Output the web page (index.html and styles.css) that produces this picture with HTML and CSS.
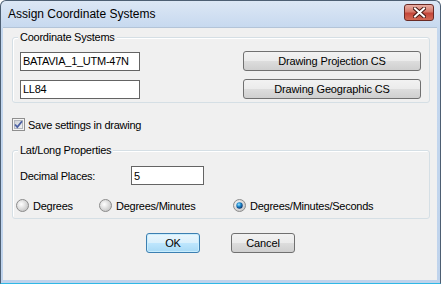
FILE: index.html
```html
<!DOCTYPE html>
<html lang="en">
<head>
    <meta charset="UTF-8">
    <meta name="viewport" content="width=device-width, initial-scale=1.0">
    <title>Assign Coordinate Systems</title>
    <link rel="stylesheet" href="styles.css">
</head>
<body>
    <div class="window">
        <div class="title-bar">
            <span class="title">Assign Coordinate Systems</span>
            <button class="close-btn" aria-label="Close">
                <svg width="13" height="11" viewBox="0 0 13 11">
                    <path d="M2 1.5 L11 9.5 M11 1.5 L2 9.5" stroke="#4a1a14" stroke-width="4" stroke-linecap="square"/>
                    <path d="M2 1.5 L11 9.5 M11 1.5 L2 9.5" stroke="#ffffff" stroke-width="2" stroke-linecap="square"/>
                </svg>
            </button>
        </div>

        <div class="client">
            <div class="group group-cs">
                <span class="legend">Coordinate Systems</span>
                <div class="cs-row">
                    <input type="text" class="textbox cs-input" value="BATAVIA_1_UTM-47N">
                    <button class="btn cs-btn">Drawing Projection CS</button>
                </div>
                <div class="cs-row">
                    <input type="text" class="textbox cs-input" value="LL84">
                    <button class="btn cs-btn">Drawing Geographic CS</button>
                </div>
            </div>

            <label class="check-row">
                <span class="checkbox">
                    <svg width="13" height="13" viewBox="0 0 13 13">
                        <defs>
                            <linearGradient id="cbFill" x1="0" y1="0" x2="1" y2="1">
                                <stop offset="0" stop-color="#cbcfd5"/>
                                <stop offset="1" stop-color="#f4f4f4"/>
                            </linearGradient>
                        </defs>
                        <rect x="0.5" y="0.5" width="12" height="12" fill="#f4f4f4" stroke="#8f8f8f"/>
                        <rect x="2.5" y="2.5" width="8" height="8" fill="url(#cbFill)" stroke="#b2b6bd"/>
                        <path d="M3 6.5 L5.3 9 L10 3.2" fill="none" stroke="#4c61a4" stroke-width="1.8"/>
                    </svg>
                </span>
                Save settings in drawing
            </label>

            <div class="group group-ll">
                <span class="legend">Lat/Long Properties</span>
                <div class="decimal-row">
                    <span class="decimal-label">Decimal Places:</span>
                    <input type="text" class="textbox decimal-input" value="5">
                </div>
                <div class="radio-row">
                    <label class="radio radio-deg">
                        <svg width="13" height="13" viewBox="0 0 13 13">
                            <defs>
                                <radialGradient id="rOff" cx="0.4" cy="0.4" r="0.6">
                                    <stop offset="0" stop-color="#ffffff"/>
                                    <stop offset="1" stop-color="#c8c8c8"/>
                                </radialGradient>
                            </defs>
                            <circle cx="6.5" cy="6.5" r="6" fill="url(#rOff)" stroke="#8c8c8c"/>
                        </svg>
                        Degrees
                    </label>
                    <label class="radio radio-dm">
                        <svg width="13" height="13" viewBox="0 0 13 13">
                            <circle cx="6.5" cy="6.5" r="6" fill="url(#rOff)" stroke="#8c8c8c"/>
                        </svg>
                        Degrees/Minutes
                    </label>
                    <label class="radio radio-dms">
                        <svg width="13" height="13" viewBox="0 0 13 13">
                            <defs>
                                <radialGradient id="rOn" cx="0.4" cy="0.35" r="0.6">
                                    <stop offset="0" stop-color="#9ee3ff"/>
                                    <stop offset="0.5" stop-color="#1f8ccf"/>
                                    <stop offset="1" stop-color="#0c3d7a"/>
                                </radialGradient>
                            </defs>
                            <circle cx="6.5" cy="6.5" r="6" fill="url(#rOff)" stroke="#8c8c8c"/>
                            <circle cx="6.5" cy="6.5" r="3.2" fill="url(#rOn)"/>
                        </svg>
                        Degrees/Minutes/Seconds
                    </label>
                </div>
            </div>

            <div class="dialog-buttons">
                <button class="btn btn-default ok-btn">OK</button>
                <button class="btn cancel-btn">Cancel</button>
            </div>
        </div>
    </div>
</body>
</html>
```

FILE: styles.css
```css
/* General Styles */
body {
    margin: 0;
    font-family: "Liberation Sans", Arial, sans-serif;
    font-size: 11px;
    color: #000;
    background: #ffffff;
}

/* Window frame */
.window {
    width: 441px;
    height: 284px;
    box-sizing: border-box;
    border: 1px solid #4d5f73;
    border-bottom-color: #2fb8e6;
    border-radius: 6px 6px 0 0;
    background: linear-gradient(#dce7f5, #c4d7ee 30px, #bfd3ec);
    padding: 0 3px 3px 2px;
    display: flex;
    flex-direction: column;
}

.title-bar {
    height: 26px;
    display: flex;
    align-items: center;
    justify-content: space-between;
    padding: 0 3px 0 5px;
}

.title {
    font-size: 12px;
    color: #000;
}

.close-btn {
    width: 30px;
    height: 17px;
    margin-top: -4px;
    padding: 0;
    border: 1px solid #6a2a24;
    border-radius: 3px;
    background: linear-gradient(#e9aea4, #d67a6b 45%, #c4463a 55%, #d36a55);
    display: flex;
    align-items: center;
    justify-content: center;
}

/* Client area */
.client {
    flex: 1;
    background: #f0f0f0;
    border-top: 1px solid #b3c4d8;
    padding: 9px 7px 0 9px;
    letter-spacing: -0.25px;
}

/* Group boxes */
.group {
    position: relative;
    box-sizing: border-box;
    border: 1px solid #d5dfe5;
    border-radius: 3px;
    box-shadow: inset 1px 1px 0 #ffffff;
}

.legend {
    position: absolute;
    top: -7px;
    left: 5px;
    padding: 0 2px;
    background: #f0f0f0;
    line-height: 13px;
}

.group-cs {
    height: 66px;
    padding: 13px 8px 0 7px;
}

.cs-row {
    display: flex;
    align-items: center;
    justify-content: space-between;
    height: 20px;
    margin-bottom: 8px;
}

.textbox {
    box-sizing: border-box;
    height: 19px;
    border: 1px solid #646464;
    background: #fff;
    font-family: "Liberation Sans", Arial, sans-serif;
    font-size: 11px;
    letter-spacing: -0.25px;
    padding: 0 2px;
    margin: 0;
    outline: none;
}

.cs-input {
    width: 120px;
}

.btn {
    box-sizing: border-box;
    height: 20px;
    padding: 0;
    border: 1px solid #707070;
    border-radius: 3px;
    background: linear-gradient(#f2f2f2, #ebebeb 50%, #dddddd 51%, #cfcfcf);
    font-family: "Liberation Sans", Arial, sans-serif;
    font-size: 11px;
    letter-spacing: -0.15px;
    color: #000;
}

.cs-btn {
    width: 178px;
}

/* Checkbox */
.check-row {
    display: flex;
    align-items: center;
    gap: 3px;
    height: 13px;
    margin: 15px 0 0 0;
}

.checkbox {
    display: flex;
}

.group-ll {
    height: 69px;
    margin-top: 19px;
    padding: 15px 8px 0 3px;
}

.decimal-row {
    display: flex;
    align-items: center;
    height: 19px;
    padding-left: 4px;
}

.decimal-label {
    width: 111px;
}

.decimal-input {
    width: 73px;
}

.radio-row {
    display: flex;
    align-items: center;
    height: 13px;
    margin-top: 14px;
}

.radio {
    display: flex;
    align-items: center;
    gap: 4px;
}

.radio-deg {
    width: 83px;
}

.radio-dm {
    width: 134px;
}

/* Dialog buttons */
.dialog-buttons {
    display: flex;
    gap: 31px;
    margin-top: 14px;
    padding-left: 134px;
}

.ok-btn {
    width: 54px;
}

.cancel-btn {
    width: 64px;
}

.btn-default {
    border-color: #3c7fb1;
    background: linear-gradient(#eaf6fd, #d9f0fc 50%, #bee6fd 51%, #a7d9f5);
    box-shadow: inset 0 0 0 1px #c9edfd;
}
```
